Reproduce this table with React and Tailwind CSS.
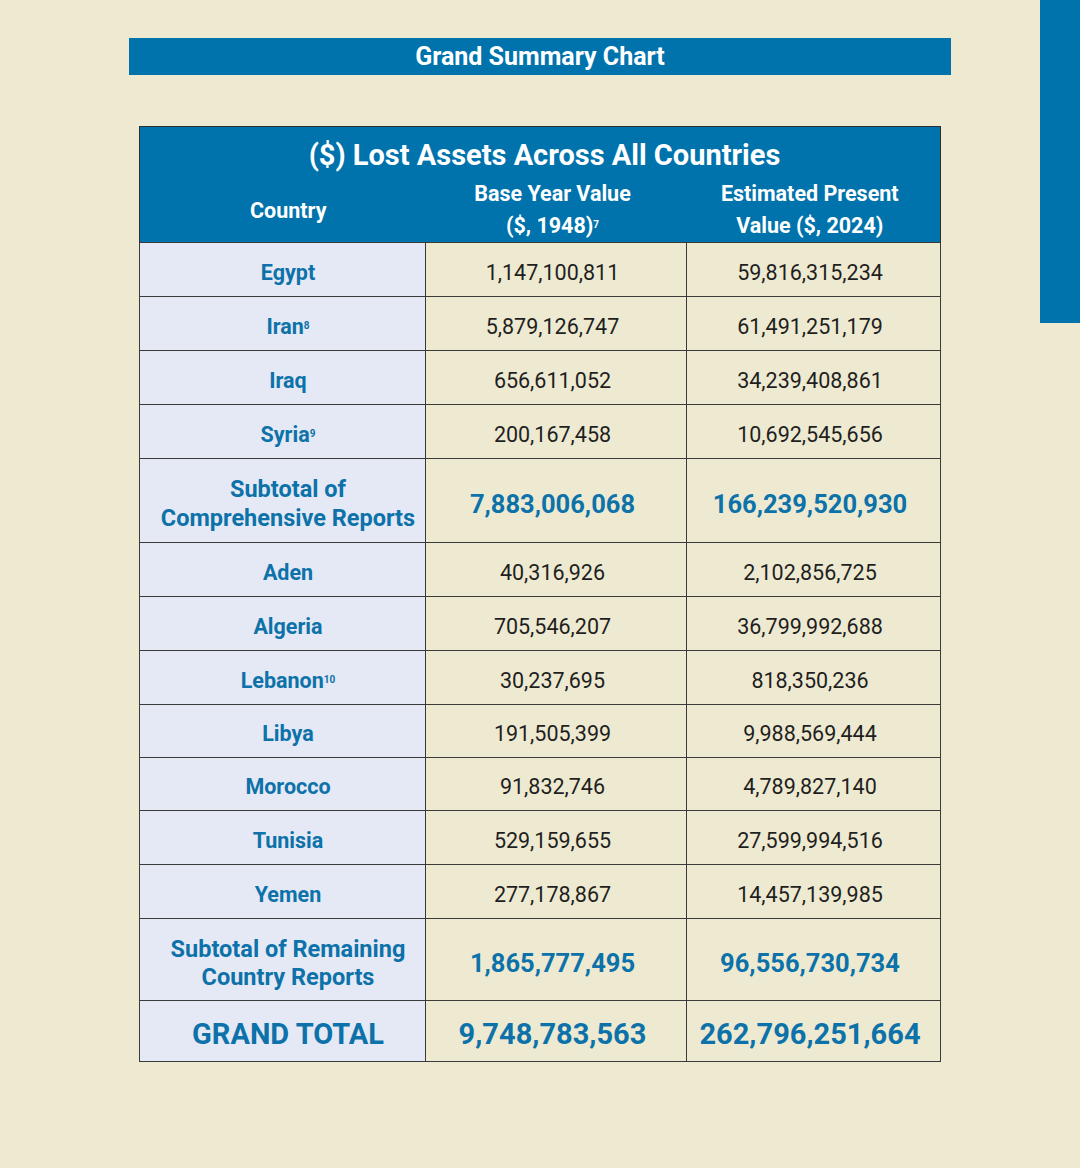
import React from "react";

const groupA = [
  { name: "Egypt", base: "1,147,100,811", present: "59,816,315,234" },
  { name: "Iran", note: "8", base: "5,879,126,747", present: "61,491,251,179" },
  { name: "Iraq", base: "656,611,052", present: "34,239,408,861" },
  { name: "Syria", note: "9", base: "200,167,458", present: "10,692,545,656" },
];

const groupB = [
  { name: "Aden", base: "40,316,926", present: "2,102,856,725", h: "h-[54px]" },
  { name: "Algeria", base: "705,546,207", present: "36,799,992,688", h: "h-[54px]" },
  { name: "Lebanon", note: "10", base: "30,237,695", present: "818,350,236", h: "h-[54px]" },
  { name: "Libya", base: "191,505,399", present: "9,988,569,444", h: "h-[53px]" },
  { name: "Morocco", base: "91,832,746", present: "4,789,827,140", h: "h-[53px]" },
  { name: "Tunisia", base: "529,159,655", present: "27,599,994,516", h: "h-[54px]" },
  { name: "Yemen", base: "277,178,867", present: "14,457,139,985", h: "h-[54px]" },
];

// body cells sit a few px below centre in the reference
const cell = "border border-[#3a3a3a] text-center align-middle p-0 pt-[8px]";
const first = `${cell} pl-[10px] bg-[#e5e9f5] text-[#0c72a9] font-bold`;
const second = `${cell} pr-[8px]`;
const third = `${cell} pr-[7px]`;

const CountryRow = ({ row, height }) => (
  <tr className={height}>
    <td className={`${first} text-[21.5px]`}>
      {row.name}
      {row.note && <sup className="text-[10px]">{row.note}</sup>}
    </td>
    <td className={`${second} text-[#1f1f1f] text-[21.5px]`}>{row.base}</td>
    <td className={`${third} text-[#1f1f1f] text-[21.5px]`}>{row.present}</td>
  </tr>
);

const SubtotalRow = ({ label, base, present, height, leading }) => (
  <tr className={height}>
    <td className={`${first} text-[23.5px] ${leading}`}>{label}</td>
    <td className={`${second} text-[#0c72a9] font-bold text-[25.5px]`}>{base}</td>
    <td className={`${third} text-[#0c72a9] font-bold text-[25.5px]`}>{present}</td>
  </tr>
);

export default function App() {
  return (
    <div
      className="min-h-[1168px] bg-[#eeead1] flex"
      style={{ fontFamily: "Roboto, 'Liberation Sans', sans-serif" }}
    >
      <div className="w-[1000px] ml-[40px] flex flex-col items-center">
        <div className="mt-[38px] w-[822px] h-[37px] bg-[#0073ad] text-white font-bold text-[25px] flex items-center justify-center">
          Grand Summary Chart
        </div>

        <table className="mt-[51px] w-[800px] border-collapse border border-[#2e2e2e] table-fixed">
          <colgroup>
            <col className="w-[286px]" />
            <col className="w-[261px]" />
            <col className="w-[253px]" />
          </colgroup>
          <thead className="bg-[#0073ad] text-white">
            <tr className="h-[47px]">
              <th colSpan={3} className="font-bold text-[29px] leading-[36px] p-0 pt-[10px] pl-[9px] text-center">
                ($) Lost Assets Across All Countries
              </th>
            </tr>
            <tr className="h-[67px]">
              <th className="font-bold text-[21.5px] leading-[32px] text-center align-middle p-0 pt-[6px] pl-[10px]">
                Country
              </th>
              <th className="font-bold text-[21.5px] leading-[32px] text-center align-top p-0 pt-[4px] pr-[8px]">
                Base Year Value
                <br />
                ($, 1948)<sup className="text-[10px]">7</sup>
              </th>
              <th className="font-bold text-[21.5px] leading-[32px] text-center align-top p-0 pt-[4px] pr-[7px]">
                Estimated Present
                <br />
                Value ($, 2024)
              </th>
            </tr>
          </thead>
          <tbody className="bg-[#eeead1]">
            {groupA.map((row) => (
              <CountryRow key={row.name} row={row} height="h-[54px]" />
            ))}
            <SubtotalRow
              label={<>Subtotal of<br />Comprehensive Reports</>}
              base="7,883,006,068"
              present="166,239,520,930"
              height="h-[84px]"
              leading="leading-[29px]"
            />
            {groupB.map((row) => (
              <CountryRow key={row.name} row={row} height={row.h} />
            ))}
            <SubtotalRow
              label={<>Subtotal of Remaining<br />Country Reports</>}
              base="1,865,777,495"
              present="96,556,730,734"
              height="h-[82px]"
              leading="leading-[28px]"
            />
            <tr className="h-[61px]">
              <td className={`${first} text-[29px]`}>GRAND TOTAL</td>
              <td className={`${second} text-[#0c72a9] font-bold text-[29px]`}>9,748,783,563</td>
              <td className={`${third} text-[#0c72a9] font-bold text-[29px]`}>262,796,251,664</td>
            </tr>
          </tbody>
        </table>
      </div>
      <div className="w-[40px] h-[323px] bg-[#0073ad]" />
    </div>
  );
}
